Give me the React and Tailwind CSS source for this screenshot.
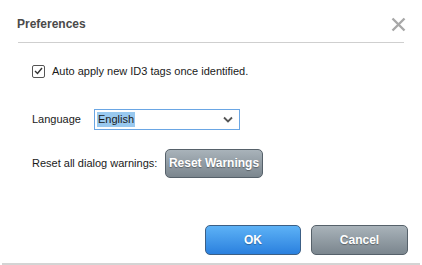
import React from "react";

const ChevronDown = () => (
  <svg width="10" height="7" viewBox="0 0 10 7" className="text-[#555]">
    <path d="M1 1.5 L5 5.5 L9 1.5" fill="none" stroke="currentColor" strokeWidth="1.8" />
  </svg>
);

const CloseX = () => (
  <svg width="15" height="15" viewBox="0 0 15 15">
    <path d="M1.5 1.5 L13.5 13.5 M13.5 1.5 L1.5 13.5" stroke="#a8a8a8" strokeWidth="2.4" />
  </svg>
);

const App = () => {
  return (
    <div
      className="w-[422px] h-[265px] bg-white relative overflow-hidden text-[11px] text-[#1a1a1a]"
      style={{ fontFamily: '"Liberation Sans", Arial, sans-serif' }}
    >
      {/* Header */}
      <div className="flex items-center justify-between pl-[17px] pr-[16px] pt-[12px] h-[36px]">
        <div className="text-[12px] font-bold text-[#4a4a4a]">Preferences</div>
        <CloseX />
      </div>
      <div className="mx-[18px] mt-[6px] h-px bg-[#cfcfcf]" />

      {/* Body */}
      <div className="pl-[32px] pt-[20px]">
        <label className="flex items-center gap-[7px]">
          <span className="w-[13px] h-[13px] border border-[#555] rounded-[2px] flex items-center justify-center bg-white">
            <svg width="9" height="8" viewBox="0 0 9 8">
              <path d="M1 4 L3.5 6.5 L8 1" fill="none" stroke="#333" strokeWidth="1.4" />
            </svg>
          </span>
          <span>Auto apply new ID3 tags once identified.</span>
        </label>

        <div className="flex items-center mt-[29px]">
          <span className="w-[62px]">Language</span>
          <div className="w-[146px] h-[21px] border border-[#6aa6e4] flex items-center justify-between pl-[2px] pr-[6px]">
            <span className="bg-[#99c9ef] px-px leading-[15px]">English</span>
            <ChevronDown />
          </div>
        </div>

        <div className="flex items-center mt-[19px]">
          <span className="w-[133px] whitespace-nowrap">Reset all dialog warnings:</span>
          <button className="w-[98px] h-[29px] whitespace-nowrap rounded-[5px] border border-[#56616a] bg-gradient-to-b from-[#a9b3ba] to-[#7b868e] text-white font-bold text-[12px] [text-shadow:0_1px_1px_rgba(0,0,0,0.35)]">
            Reset Warnings
          </button>
        </div>
      </div>

      {/* Footer */}
      <div className="absolute left-0 right-0 top-[225px] flex justify-end gap-[10px] pr-[14px]">
        <button className="w-[96px] h-[30px] rounded-[5px] border border-[#3c5f85] bg-gradient-to-b from-[#5db2f6] to-[#2a80de] text-white font-bold text-[12px] [text-shadow:0_1px_1px_rgba(0,0,0,0.3)]">
          OK
        </button>
        <button className="w-[97px] h-[30px] rounded-[5px] border border-[#56616a] bg-gradient-to-b from-[#a9b3ba] to-[#7b868e] text-white font-bold text-[12px] [text-shadow:0_1px_1px_rgba(0,0,0,0.35)]">
          Cancel
        </button>
      </div>

      <div className="absolute left-[2px] right-[2px] bottom-0 h-[2px] bg-[#d4d4d4]" />
    </div>
  );
};

export default App;
